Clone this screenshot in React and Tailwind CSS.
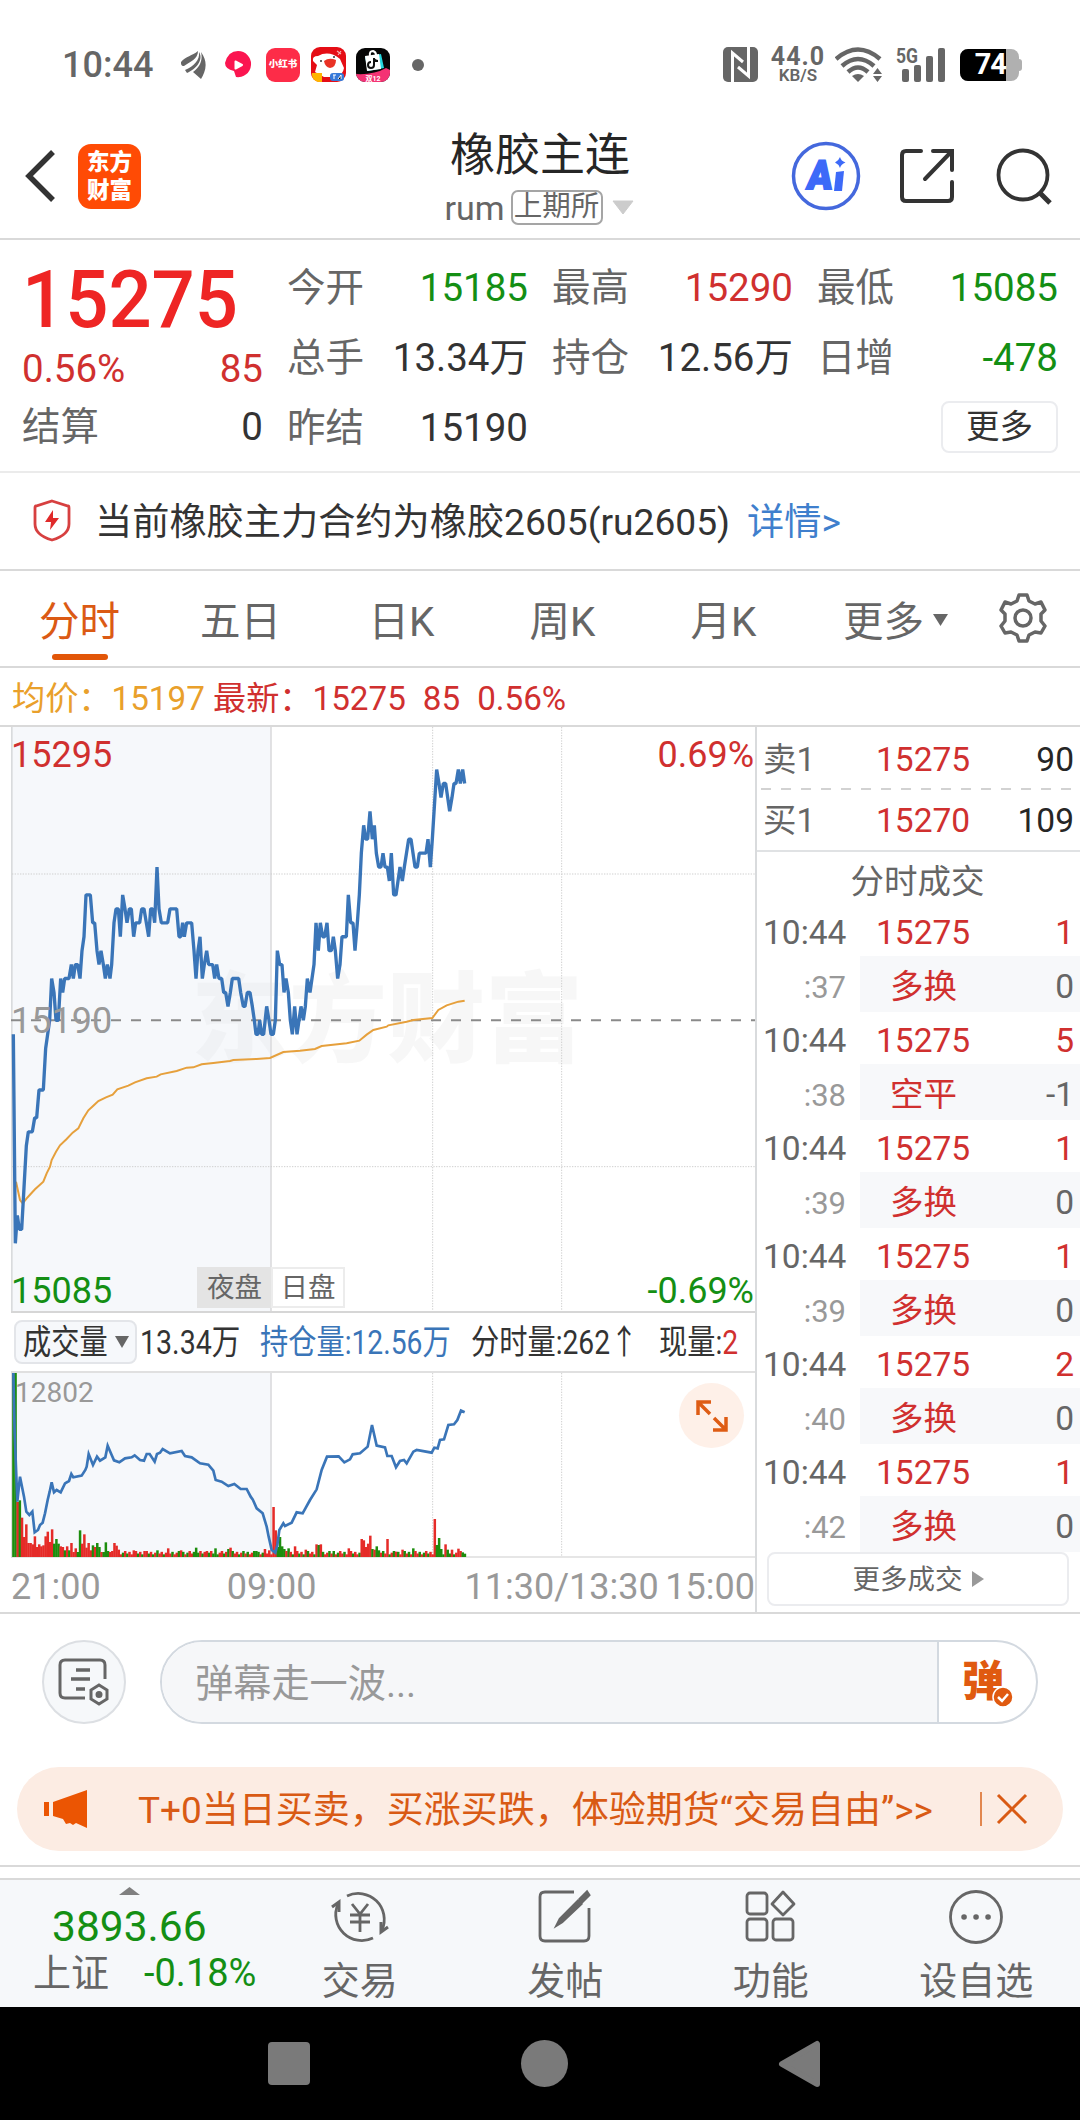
import { clsx } from 'clsx';

const RED = 'text-[#d0302f]';
const GREEN = 'text-[#148f14]';

const QUOTE_COLUMNS = [
  [
    { label: '今开', value: '15185', color: GREEN },
    { label: '总手', value: '13.34万' },
    { label: '昨结', value: '15190' },
  ],
  [
    { label: '最高', value: '15290', color: RED },
    { label: '持仓', value: '12.56万' },
  ],
  [
    { label: '最低', value: '15085', color: GREEN },
    { label: '日增', value: '-478', color: GREEN },
  ],
];

const TABS = ['分时', '五日', '日K', '周K', '月K'];

const TRADES = [
  { sec: ':37', price: '15275', qty: '1', kind: '多换', diff: '0' },
  { sec: ':38', price: '15275', qty: '5', kind: '空平', diff: '-1' },
  { sec: ':39', price: '15275', qty: '1', kind: '多换', diff: '0' },
  { sec: ':39', price: '15275', qty: '1', kind: '多换', diff: '0' },
  { sec: ':40', price: '15275', qty: '2', kind: '多换', diff: '0' },
  { sec: ':42', price: '15275', qty: '1', kind: '多换', diff: '0' },
];

// [x, ticks from settlement price], 3 units per pixel, 1 tick = 5
const PRICE = [
  [40, -1], [46, -16], [52, -14], [58, -15], [65, -15], [72, -12], [79, -9], [85, -8], [97, -8],
  [104, -7], [110, -7], [117, -5], [130, -5], [137, -2], [143, -1], [149, 0], [155, 3], [162, 2],
  [168, 0], [175, 0], [182, 3], [188, 2], [194, 3], [207, 3], [214, 4], [220, 3], [226, 4],
  [233, 4], [240, 3], [246, 5], [252, 6], [258, 9], [271, 9], [278, 7], [284, 7], [291, 5],
  [297, 4], [303, 5], [310, 4], [316, 3], [322, 4], [330, 3], [335, 4], [342, 7], [348, 8],
  [355, 8], [361, 6], [368, 9], [375, 8], [381, 7], [388, 8], [394, 8], [401, 6], [407, 7],
  [419, 7], [425, 8], [432, 8], [439, 7], [446, 6], [452, 8], [458, 8], [464, 7], [471, 11],
  [477, 8], [484, 7], [503, 7], [510, 8], [530, 8], [537, 6], [542, 6], [548, 7], [553, 6],
  [560, 7], [575, 7], [582, 5], [588, 3], [594, 5], [600, 6], [607, 3], [613, 4], [620, 5],
  [626, 4], [638, 4], [644, 3], [650, 4], [657, 3], [665, 3], [671, 2], [677, 2], [684, 1],
  [691, 2], [697, 3], [716, 3], [722, 2], [730, 1], [735, 1], [742, 2], [750, 2], [757, 1],
  [763, 0], [768, -1], [774, -1], [779, 0], [785, -1], [791, -1], [800, 1], [807, 0], [813, -1],
  [820, -1], [826, 0], [832, 5], [839, 4], [846, 4], [852, 2], [858, 3], [865, 2], [871, 0],
  [877, -1], [884, 1], [891, -1], [897, 0], [903, 1], [910, 0], [916, 1], [922, 3], [930, 2],
  [936, 3], [942, 4], [948, 7], [955, 5], [961, 7], [968, 6], [974, 6], [981, 7], [987, 5],
  [994, 5], [1000, 6], [1006, 5], [1013, 3], [1020, 4], [1026, 6], [1039, 6], [1045, 9],
  [1052, 7], [1059, 7], [1065, 5], [1072, 7], [1078, 9], [1084, 12], [1091, 14], [1097, 13],
  [1103, 13], [1110, 15], [1117, 13], [1123, 14], [1129, 12], [1136, 11], [1143, 11], [1149, 12],
  [1155, 11], [1162, 11], [1168, 10], [1174, 12], [1181, 9], [1188, 9], [1194, 10], [1200, 11],
  [1207, 10], [1213, 11], [1226, 13], [1233, 13], [1245, 11], [1252, 11], [1258, 12], [1278, 12],
  [1284, 13], [1291, 11], [1297, 13], [1310, 18], [1317, 17], [1323, 16], [1330, 17], [1337, 17],
  [1349, 15], [1356, 16], [1362, 17], [1368, 17], [1375, 18], [1381, 17], [1388, 18], [1394, 17],
];
const pricePoints = PRICE.map(([x, t]) => `${x},${880 - t * 41.8}`).join(' ');

const AVG_POINTS =
  '48,1364 60,1419 68,1429 80,1414 92,1401 105,1387 130,1364 140,1339 150,1319 155,1299 168,1274 180,1255 200,1236 218,1217 235,1204 250,1174 265,1150 280,1136 295,1122 318,1111 338,1103 352,1087 385,1076 405,1066 440,1054 470,1049 482,1042 530,1032 560,1022 580,1021 605,1012 640,1008 690,1002 700,999 770,996 810,993 850,975 900,971 945,966 965,957 1040,949 1078,941 1100,923 1120,909 1160,899 1165,895 1220,884 1240,879 1297,873 1315,849 1340,835 1375,824 1394,821';

const HOLD_POINTS =
  '40,219 44,400 52,605 60,530 72,590 79,635 88,645 97,635 104,697 114,690 120,675 128,668 135,640 143,600 149,575 155,547 162,577 170,570 182,577 195,550 207,543 214,522 220,532 245,527 256,510 260,500 266,462 279,495 291,470 300,482 316,472 323,437 335,465 342,481 358,487 375,475 395,472 404,466 420,480 432,482 440,462 449,462 464,485 471,462 480,458 488,447 510,460 545,453 555,468 575,472 600,490 625,494 640,512 647,540 665,545 685,558 703,552 722,567 740,567 752,590 758,598 770,625 788,640 800,680 806,710 815,750 826,758 832,735 838,690 850,670 855,678 875,668 890,637 908,640 930,600 950,568 965,510 981,470 1016,469 1033,487 1050,478 1058,463 1080,460 1103,440 1116,375 1130,437 1155,442 1162,468 1175,468 1188,502 1200,483 1212,480 1220,490 1240,455 1250,450 1295,458 1303,443 1313,445 1320,420 1332,418 1345,375 1362,373 1372,360 1383,332 1394,337';

// opening minutes, then the peaks of the rest of the session
const OPENING = [
  -552, -552, 165, -170, 118, 60, 98, 42, 42, 38, 62, 30, 38, 32, 35, 62, 76, 45, 83, -40, -54, -40,
  32, 30, -20, 32, -20, 42, 15, 26, -15, -80, 40, 68, 28, 42, 20, -35, 30, -42, -30, 15, -15, -44,
  -18, 15, 18, 42, 34, 22,
];
const PEAKS = {
  56: 20, 61: 18, 67: -20, 72: 26, 78: 20, 85: -28, 90: 18, 94: -26, 100: -24, 101: 28, 113: -18,
  117: 24, 119: 20, 121: 150, 122: 80, 123: -30, 124: -60, 125: -32, 126: -24, 128: -26, 131: 32,
  136: 22, 141: 38, 142: -36, 143: 38, 149: -18, 156: 26, 162: 54, 163: 50, 164: 30, 165: 40,
  166: 64, 167: -24, 168: 22, 169: -32, 170: -20, 174: 54, 178: 16, 181: 22, 186: -26, 196: 114,
  197: -36, 198: -57, 199: -24, 201: 38, 202: -22, 204: 22, 207: 25, 208: 18, 209: -14, 210: -10,
};
const VOLUME = Array.from({ length: 211 }, (_, i) => {
  if (i < OPENING.length) return OPENING[i];
  const base = 8 + ((i * 7) % 5) * 2.5;
  return PEAKS[i] ?? ((i * 11) % 7 < 3 ? -base : base);
});

const StatusBar = () => (
  <div className="flex h-[96px] items-center pt-[33px] text-[#666]">
    <span className="ml-[62px] w-[93px] text-[36px] font-medium leading-none">10:44</span>
    <svg className="ml-[26px]" width="25" height="28" viewBox="0 0 25 28" fill="#666">
      <path d="M0 11C5 5 11 5 17 0C17 8 9 11 3 15C0 15 0 13 0 11Z" />
      <path d="M18 1C23 9 15 18 6 22L4 19C13 15 19 9 18 1Z" />
      <path d="M20 1C28 12 24 21 20 28L12 21C19 16 22 9 20 1Z" />
    </svg>
    <svg className="ml-[18px]" width="28" height="28" viewBox="0 0 28 28">
      <path d="M14 0A13 13 0 0 1 27 14A13 13 0 0 1 12 26L10 20Q1 18 1 12Q4 0 14 0Z" fill="#fb1550" />
      <path d="M11.500 10.500L18 14L11.500 17.500Z" fill="#fff" stroke="#fff" strokeWidth="2" strokeLinejoin="round" />
    </svg>
    <div className="ml-[14px] flex h-[34px] w-[34px] items-center justify-center rounded-[9px] bg-[#fd2c48] text-[9.5px] font-black text-white">
      小红书
    </div>
    <svg className="ml-[11px]" width="35" height="35" viewBox="0 0 35 35">
      <rect width="35" height="35" rx="9" fill="#e50d15" />
      <path d="M4 25L6 18L2 14Q1 9 7 9Q18 3 29 12L33 21Q32 27 26 30H13Z" fill="#fff" />
      <path d="M13 14Q18 10 25 13Q25 20 19 21Q14 20 13 14Z" fill="#e93225" />
      <circle cx="10" cy="14" r="1" fill="#333" />
      <circle cx="23" cy="10" r="1" fill="#333" />
      <path d="M26 4L30 7M30 4L27 8" stroke="#f7b0b0" strokeWidth="1.200" />
      <path d="M1 26H11V35H7Q1 33 1 28Z" fill="#ffb400" />
      <rect x="19" y="26" width="14" height="8" rx="3" fill="#3679d8" />
      <path d="M22 28H25M23 28V32M27 32L30 28V32" stroke="#fff" strokeWidth="1" />
    </svg>
    <svg className="ml-[10px]" width="34" height="34" viewBox="0 0 34 34">
      <defs>
        <clipPath id="shop"><rect width="34" height="34" rx="9" /></clipPath>
      </defs>
      <g clipPath="url(#shop)">
        <rect width="34" height="34" fill="#060606" />
        <path d="M0 26Q18 27 30 20L34 22V34H0Z" fill="#f43374" />
        <path d="M9 9L25 6L28 20L12 23Z" fill="#25d9e0" />
        <path d="M9 8L23 6L25 21L11 23Z" fill="#fff" />
        <path d="M14 8Q13 3 17 3Q20 4 20 7" stroke="#fff" strokeWidth="2" fill="none" />
        <path d="M18 10V17A3 3 0 1 1 15 14M18 11Q19 13 22 13" stroke="#111" strokeWidth="2" fill="none" />
        <text x="17" y="32.500" textAnchor="middle" fontSize="7" fontWeight="700" fill="#fff">双12</text>
      </g>
    </svg>
    <span className="ml-[22px] h-[12px] w-[12px] rounded-full bg-[#666]" />

    <svg className="ml-[299px]" width="35" height="35" viewBox="0 0 35 35">
      <rect width="35" height="35" rx="5" fill="#666" />
      <path d="M9.500 35V6L20 15M25.500 0V29L15 20" fill="none" stroke="#fff" strokeWidth="3" />
    </svg>
    <div className="ml-[11px] flex w-[58px] flex-col items-center font-bold leading-none">
      <span className="text-[25px] leading-[20px] tracking-[1px]">44.0</span>
      <span className="text-[17px] font-semibold leading-[16px]">KB/S</span>
    </div>
    <svg className="ml-[8px]" width="48" height="36" viewBox="0 0 48 36">
      <g fill="none" stroke="#666" strokeWidth="4.500">
        <path d="M1 12Q23 -7 45 12" />
        <path d="M7 19Q23 5 39 19" />
        <path d="M13 25Q23 16 33 25" />
      </g>
      <path d="M17 29Q23 25 29 29L23 35Z" fill="#666" />
      <path d="M38 27L42.500 21L47 27ZM38 29L42.500 35L47 29Z" fill="#666" />
    </svg>
    <svg className="ml-[13px] overflow-visible" width="50" height="36" viewBox="0 0 50 36">
      <g fill="#666">
        <text x="0" y="15.500" fontSize="20" fontWeight="700" textLength="22" lengthAdjust="spacingAndGlyphs">5G</text>
        <rect x="6" y="22" width="7" height="13" rx="2" />
        <rect x="18" y="18" width="7" height="17" rx="2" />
        <rect x="30" y="9" width="7" height="26" rx="2" />
        <rect x="42" y="1" width="7" height="34" rx="2" />
      </g>
    </svg>
    <div className="ml-[14px] flex items-center">
      <div className="flex h-[32px] w-[59px] items-center overflow-hidden rounded-[8px] bg-[#b0b0b0]">
        <div className="flex h-full w-[46px] items-center justify-end bg-black text-[29px] font-bold leading-none tracking-[-1px] text-white">
          74
        </div>
      </div>
      <span className="h-[12px] w-[3px] rounded-r-[3px] bg-[#b0b0b0]" />
    </div>
  </div>
);

const Header = () => (
  <header className="flex h-[144px] items-center border-b-2 border-[#d9d9d9] pt-[18px]">
    <div className="flex w-[340px] items-center">
      <svg className="ml-[24px]" width="34" height="54" viewBox="0 0 34 54">
        <path d="M29 3L5 27L29 51" fill="none" stroke="#333" strokeWidth="5.500" />
      </svg>
      <div className="ml-[20px] flex h-[65px] w-[63px] flex-col items-center justify-center rounded-[13px] bg-[#ff4b05] text-[22.5px] font-black leading-[28px] text-white">
        <span>东方</span>
        <span>财富</span>
      </div>
    </div>
    <div className="flex w-[400px] flex-col items-center pt-[4px]">
      <h1 className="text-[45px] font-normal leading-[50px] text-[#262626]">橡胶主连</h1>
      <div className="mt-[9px] flex items-center pr-[2px] text-[#666]">
        <span className="text-[34px] leading-none">rum</span>
        <span className="ml-[6px] flex h-[35px] w-[92px] items-center justify-center rounded-[7px] border-2 border-[#a5a5a5] text-[28.5px] leading-none">
          上期所
        </span>
        <svg className="ml-[9px]" width="22" height="15" viewBox="0 0 22 15">
          <path d="M1 1H21L11 14Z" fill="#ccc" stroke="#ccc" strokeLinejoin="round" />
        </svg>
      </div>
    </div>
    <div className="flex items-center pl-[51px]">
      <svg width="70" height="70" viewBox="0 0 70 70">
        <circle cx="35" cy="35" r="32.500" fill="none" stroke="#4468dd" strokeWidth="3.500" />
        <text x="14" y="48" fontSize="40" fontWeight="900" textLength="25" lengthAdjust="spacingAndGlyphs" transform="translate(7 0) skewX(-7)" fill="#3d6af8" stroke="#3d6af8" strokeWidth="2">A</text>
        <path d="M45 31L53 30L51 50H43Z" fill="#3d6af8" />
        <path d="M49 16Q50 20 54.500 21.500Q50 23 49 27Q47.500 23 44 21.500Q47.500 20 49 16Z" fill="#3d6af8" />
      </svg>
      <svg className="ml-[38px]" width="56" height="56" viewBox="0 0 56 56" fill="none" stroke="#333" strokeWidth="4">
        <path d="M22 3H7Q3 3 3 7V49Q3 53 7 53H49Q53 53 53 49V34" strokeLinecap="round" />
        <path d="M34 3H53V22M52 4L26 31" strokeLinecap="round" />
      </svg>
      <svg className="ml-[41px]" width="58" height="58" viewBox="0 0 58 58" fill="none" stroke="#333" strokeWidth="3.800">
        <circle cx="27" cy="28" r="24.500" />
        <path d="M43 45L54 56" strokeWidth="5" />
      </svg>
    </div>
  </header>
);

const Quote = () => (
  <section className="flex h-[233px] gap-[24px] border-b-2 border-[#ebebeb] pt-[13px] pl-[22px] text-[38.5px] leading-none text-[#333]">
    <div className="w-[241px]">
      <div className="flex h-[93px] items-center">
        <span className="inline-block origin-left scale-x-[0.95] text-[80px] font-medium text-[#ee2524]">15275</span>
      </div>
      <div className={clsx('flex h-[46px] items-center justify-between', RED)}>
        <span>0.56%</span>
        <span>85</span>
      </div>
      <div className="flex h-[70px] items-center justify-between">
        <span className="text-[#666]">结算</span>
        <span>0</span>
      </div>
    </div>
    {QUOTE_COLUMNS.map((rows, i) => (
      <div key={i} className="w-[241px]">
        {rows.map(({ label, value, color }) => (
          <div key={label} className="flex h-[70px] items-center justify-between">
            <span className="text-[#666]">{label}</span>
            <span className={color}>{value}</span>
          </div>
        ))}
        {i === 2 && (
          <div className="flex h-[68px] items-center justify-end">
            <button className="h-[52px] w-[117px] rounded-[8px] border-2 border-[#ebecef] text-[33.500px]">更多</button>
          </div>
        )}
      </div>
    ))}
  </section>
);

const Notice = () => (
  <div className="flex h-[98px] items-center border-b-2 border-[#d9d9d9] pl-[33px] text-[37.2px] leading-none text-[#333]">
    <svg className="mb-[2px]" width="38" height="43" viewBox="0 0 38 43">
      <path d="M19 2L35 7Q36 7 36 9V25Q36 36 19 41Q2 36 2 25V9Q2 7 3 7Z" fill="none" stroke="#d74040" strokeWidth="2.800" />
      <path d="M20 11L12 23H18L17 31L26 19H20Z" fill="#e02a2a" />
    </svg>
    <span className="ml-[24px] pt-[3px]">当前橡胶主力合约为橡胶2605(ru2605)</span>
    <a className="ml-[17px] pt-[3px] text-[#3f7fcd]">详情&gt;</a>
  </div>
);

const Tabs = () => (
  <nav className="flex h-[97px] items-center border-b-2 border-[#d9d9d9] text-[40.5px] leading-none text-[#666]">
    {TABS.map((tab, i) => (
      <div
        key={tab}
        className={clsx('relative flex h-full w-[161px] items-center justify-center pt-[7px] pr-[2px]', i === 0 && 'text-[#db5a14]')}
      >
        {tab}
        {i === 0 && <span className="absolute bottom-[6px] left-[52px] h-[6px] w-[56px] rounded-full bg-[#e25608]" />}
      </div>
    ))}
    <div className="ml-[38px] flex items-center pt-[7px]">
      更多
      <svg className="mb-[5px] ml-[9px]" width="15" height="12" viewBox="0 0 15 12">
        <path d="M0 0H15L7.500 12Z" fill="#666" />
      </svg>
    </div>
    <svg className="ml-[51px] mb-[1px]" width="48" height="50" viewBox="0 0 48 50" fill="none" stroke="#666" strokeWidth="3.500" strokeLinejoin="round">
      <path d="M18 8L20 2H28L30 8L36 11L42 9L46 17L42 21V28L46 33L42 40L36 39L30 42L28 48H20L18 42L12 39L6 40L2 33L6 28V21L2 17L6 9L12 11Z" />
      <circle cx="24" cy="25" r="8" />
    </svg>
  </nav>
);

const PriceChart = () => (
  <div className="relative h-[586px]">
    <span className="absolute left-[180px] top-[244px] text-[98px] font-black leading-[100px] text-black/[0.03]">东方财富</span>
    <svg className="absolute inset-0" width="745" height="586" viewBox="33 0 2235 1758">
      <rect x="36" y="0" width="777" height="1755" fill="#e0e6f0" fillOpacity="0.28" />
      <path d="M35 0V1756" stroke="#d9dbdd" strokeWidth="6" />
      <path d="M813 0V1756" stroke="#dcdcde" strokeWidth="5" />
      <path d="M1298 0V1756M1685 0V1756M36 441H2265M36 1319H2265" stroke="#cfcfcf" strokeWidth="3" strokeDasharray="4 4" />
      <path d="M33 1755H2265" stroke="#d6d6d6" strokeWidth="6" />
      <path d="M33 880H2265" stroke="#8a8a8a" strokeWidth="6" strokeDasharray="30 30" />
      <polyline points={AVG_POINTS} fill="none" stroke="#e6a03c" strokeWidth="6" />
      <polyline points={pricePoints} fill="none" stroke="#3a75b8" strokeWidth="10" strokeLinejoin="bevel" />
    </svg>
    <div className="absolute inset-0 flex flex-col justify-between pt-[10px] pb-[4px] text-[36px] leading-[36px]">
      <div className="flex justify-between pr-px">
        <span className={RED}>15295</span>
        <span className={RED}>0.69%</span>
      </div>
      <span className="pb-[5px] text-[#999]">15190</span>
      <div className="flex justify-between pr-px">
        <span className={GREEN}>15085</span>
        <span className={GREEN}>-0.69%</span>
      </div>
    </div>
    <div className="absolute bottom-[5px] left-[186px] flex h-[41px] text-[27.5px] leading-none text-[#666]">
      <span className="flex w-[74px] items-center justify-center bg-[#e4e4e4] pt-px pl-px">夜盘</span>
      <span className="flex w-[74px] items-center justify-center border-2 border-[#ececec] bg-white">日盘</span>
    </div>
  </div>
);

const VolumeInfo = () => (
  <div className="flex h-[60px] items-center border-b-2 border-[#e0e0e0] text-[34px] leading-none whitespace-nowrap text-[#333]">
    <div className="ml-[3px] flex h-[44px] w-[123px] items-center rounded-[8px] border-2 border-[#e3e5e9] bg-[#f6f8fb] pl-[7px]">
      <span className="w-[90px] origin-left scale-x-[0.83]">成交量</span>
      <svg className="ml-[2px]" width="14" height="12" viewBox="0 0 14 12">
        <path d="M0 0H14L7 12Z" fill="#666" />
      </svg>
    </div>
    <span className="ml-[3px] w-[120px] origin-left scale-x-[0.84]">13.34万</span>
    <span className="w-[211px] origin-left scale-x-[0.83] text-[#3a75b8]">持仓量:12.56万</span>
    <span className="w-[188px] origin-left scale-x-[0.83]">分时量:262↑</span>
    <span className="w-[90px] origin-left scale-x-[0.83]">
      现量:<span className={RED}>2</span>
    </span>
  </div>
);

const VolumeChart = () => (
  <div className="relative h-[185px]">
    <svg width="745" height="185" viewBox="33 219 2235 555">
      <rect x="36" y="219" width="777" height="552" fill="#f6f8fb" />
      <path d="M35 219V774M813 219V774" stroke="#dcdcde" strokeWidth="5" />
      <path d="M1298 219V771M1685 219V771" stroke="#cfcfcf" strokeWidth="3" strokeDasharray="4 4" />
      <path d="M33 771H2265" stroke="#dedede" strokeWidth="5" />
      {VOLUME.map((v, i) => (
        <rect
          key={i}
          x={36.5 + i * 6.45}
          y={771 - Math.abs(v)}
          width="7.500"
          height={Math.abs(v)}
          fill={v < 0 ? '#1c8d0d' : '#e52b28'}
        />
      ))}
      <polyline points={HOLD_POINTS} fill="none" stroke="#3a75b8" strokeWidth="8" />
    </svg>
    <span className="absolute left-[4px] top-[6px] text-[28px] leading-[28px] text-[#999]">12802</span>
    <span className="absolute left-[668px] top-[10px] flex h-[65px] w-[65px] items-center justify-center rounded-full bg-[#fef0e8]">
      <svg width="32" height="32" viewBox="0 0 32 32" fill="none" stroke="#de5c14" strokeWidth="3.500">
        <path d="M15 2H2V15M2 2L14 14M17 30H30V17M30 30L18 18" />
      </svg>
    </span>
  </div>
);

const OrderPanel = () => (
  <aside className="w-[325px] border-l-2 border-[#d9dbdd] text-[33.5px] leading-none">
    <div className="flex h-[61px] items-center pt-[4px] pr-[6px] pl-[6px]">
      <span className="w-[113px] text-[#666]">卖1</span>
      <span className={RED}>15275</span>
      <span className="flex-1 text-right text-[#262626]">90</span>
    </div>
    <svg className="ml-[4px] block" width="312" height="2">
      <path d="M0 1H312" stroke="#d2d2d2" strokeWidth="2" strokeDasharray="10 10" />
    </svg>
    <div className="flex h-[60px] items-center pt-[2px] pr-[6px] pl-[6px]">
      <span className="w-[113px] text-[#666]">买1</span>
      <span className={RED}>15270</span>
      <span className="flex-1 text-right text-[#262626]">109</span>
    </div>
    <div className="flex h-[54px] items-center justify-center border-t-2 border-[#e0e2e4] pt-[8px] pr-[2px] text-[#666]">分时成交</div>
    {TRADES.map(({ sec, price, qty, kind, diff }, i) => (
      <div key={i} className="h-[108px] text-[#666]">
        <div className="flex h-[52px] items-center pt-[5px] pr-[6px] pl-[6px]">
          <span className="w-[113px]">10:44</span>
          <span className={RED}>{price}</span>
          <span className={clsx('flex-1 text-right', RED)}>{qty}</span>
        </div>
        <div className="flex h-[56px] items-center">
          <span className="w-[103px] pt-[6px] pr-[14px] text-right text-[31px] text-[#999]">{sec}</span>
          <div className="flex h-full flex-1 items-center bg-[#f7f8fa] pt-[6px] pr-[6px] pl-[30px]">
            <span className={RED}>{kind}</span>
            <span className="flex-1 text-right">{diff}</span>
          </div>
        </div>
      </div>
    ))}
    <button className="ml-[10px] flex h-[54px] w-[302px] items-center justify-center rounded-[8px] border-2 border-[#ebecef] pt-[2px] text-[27.5px] text-[#666]">
      更多成交
      <svg className="mb-[2px] ml-[9px]" width="12" height="16" viewBox="0 0 12 16">
        <path d="M0 0L12 8L0 16Z" fill="#999" />
      </svg>
    </button>
  </aside>
);

const Comment = () => (
  <div className="flex h-[138px] items-center pl-[42px]">
    <span className="mt-[-2px] flex h-[84px] w-[84px] items-center justify-center rounded-full border-2 border-[#dcdfe3] bg-[#f6f8fa]">
      <svg width="54" height="50" viewBox="0 0 54 50" fill="none" stroke="#666" strokeWidth="3">
        <path d="M48 22V8Q48 3 43 3H8Q3 3 3 8V36Q3 41 8 41H28" />
        <path d="M19 13H33M14 22H33M19 32H28" strokeWidth="3.500" />
        <path d="M42 28L50 33V42L42 47L34 42V33Z" />
        <circle cx="42" cy="37.500" r="2" fill="#666" />
      </svg>
    </span>
    <div className="mt-[-2px] ml-[34px] flex h-[84px] w-[878px] overflow-hidden rounded-full border-2 border-[#d3d9e0] bg-white">
      <div className="flex w-[777px] items-center border-r-2 border-[#d3d9e0] bg-[#f6f7f9] pt-[5px] pl-[33px] text-[38.2px] leading-none text-[#999]">
        弹幕走一波...
      </div>
      <div className="relative flex flex-1 items-center pl-[23px] text-[42px] font-black leading-none text-[#e05a10]">
        弹
        <svg className="absolute top-[44px] left-[53px]" width="22" height="22" viewBox="0 0 22 22">
          <circle cx="11" cy="11" r="10" fill="#e05a10" stroke="#fff" strokeWidth="1.500" />
          <path d="M6 11L10 15L16 8" fill="none" stroke="#fff" strokeWidth="2.500" />
        </svg>
      </div>
    </div>
  </div>
);

const Banner = () => (
  <div className="mx-[17px] mt-[15px] flex h-[84px] items-center rounded-full bg-[#fcece3] pl-[27px] text-[37px] leading-none text-[#d95a14]">
    <svg width="44" height="38" viewBox="0 0 44 38" fill="#eb5503">
      <path d="M0 12H5V26H0ZM9 12L43 0V38L32 33L29 35L26 33L22 34L19 29L9 26Z" />
    </svg>
    <span className="ml-[50px] w-[842px] pt-[2px] whitespace-nowrap">T+0当日买卖，买涨买跌，体验期货“交易自由”&gt;&gt;</span>
    <span className="h-[34px] w-[2px] bg-[#e2874f]" />
    <svg className="ml-[14px]" width="32" height="32" viewBox="0 0 32 32">
      <path d="M2 2L30 30M30 2L2 30" stroke="#d95a14" strokeWidth="3" />
    </svg>
  </div>
);

const ACTIONS = [
  {
    label: '交易',
    icon: (
      <>
        <path d="M17 9A26 26 0 0 1 52 43M43 51A26 26 0 0 1 8 17" />
        <path d="M2 20L9 15V25M58 40L51 45V35" strokeWidth="3" />
        <path d="M22 17L30 27L38 17M20 28H40M20 35H40M30 27V45" />
      </>
    ),
  },
  {
    label: '发帖',
    icon: (
      <>
        <path d="M39 5H10Q5 5 5 10V49Q5 54 10 54H49Q54 54 54 49V21" />
        <path d="M52 5L54 8L47 15L45 12ZM43 14L46 17L27 35L22 38L25 32Z" fill="#666" />
      </>
    ),
  },
  {
    label: '功能',
    icon: (
      <>
        <rect x="6" y="6" width="20" height="21" rx="3" />
        <rect x="6" y="32" width="20" height="21" rx="3" />
        <rect x="32" y="32" width="20" height="21" rx="3" />
        <path d="M42 5L53 17L42 28L31 17Z" strokeLinejoin="round" />
      </>
    ),
  },
  {
    label: '设自选',
    icon: (
      <>
        <circle cx="30" cy="30" r="25.500" />
        <path d="M18 30H18.100M30 30H30.100M42 30H42.100" strokeWidth="5.500" strokeLinecap="round" />
      </>
    ),
  },
];

const BottomBar = () => (
  <footer className="flex h-[129px] border-t-2 border-[#d9d9d9] bg-[#f6f8fa] text-[38px] leading-none text-[#666]">
    <div className="flex w-[257px] flex-col pt-[7px]">
      <svg className="ml-[119px]" width="21" height="8" viewBox="0 0 21 8">
        <path d="M0 8L10.500 0L21 8Z" fill="#808080" />
      </svg>
      <span className={clsx('mt-[11px] ml-[52px] text-[42.5px]', GREEN)}>3893.66</span>
      <div className="mt-[5px] flex items-center">
        <span className="ml-[33px] w-[111px]">上证</span>
        <span className={GREEN}>-0.18%</span>
      </div>
    </div>
    {ACTIONS.map(({ label, icon }) => (
      <div key={label} className="flex w-[205.5px] flex-col items-center pt-[7px]">
        <svg width="60" height="60" viewBox="0 0 60 60" fill="none" stroke="#666" strokeWidth="2.800">
          {icon}
        </svg>
        <span className="mt-[15px]">{label}</span>
      </div>
    ))}
  </footer>
);

const NavBar = () => (
  <div className="flex h-[113px] items-center bg-black">
    <span className="ml-[268px] h-[43px] w-[42px] rounded-[4px] bg-[#7a7a7a]" />
    <span className="ml-[211px] h-[47px] w-[47px] rounded-full bg-[#7a7a7a]" />
    <svg className="ml-[210px]" width="44" height="48" viewBox="0 0 44 48">
      <path d="M4 24L39 4V44Z" fill="#7a7a7a" stroke="#7a7a7a" strokeWidth="6" strokeLinejoin="round" />
    </svg>
  </div>
);

const App = () => (
  <div className="h-[2120px] w-[1080px] overflow-hidden bg-white font-[Roboto,'Noto_Sans_CJK_SC',sans-serif]">
    <StatusBar />
    <Header />
    <Quote />
    <Notice />
    <Tabs />
    <div className="flex h-[57px] items-center pt-[4px] pl-[12px] text-[33.2px] leading-none whitespace-nowrap">
      <span className="w-[201px] text-[#e9a02b]">均价：15197</span>
      <span className={RED}>最新：15275</span>
      <span className={clsx('ml-[17px]', RED)}>85</span>
      <span className={clsx('ml-[17px]', RED)}>0.56%</span>
    </div>
    <main className="flex h-[889px] border-y-2 border-[#d9d9d9]">
      <div className="w-[755px] pl-[11px]">
        <PriceChart />
        <VolumeInfo />
        <VolumeChart />
        <div className="flex h-[54px] items-center pt-[3px] text-[36px] leading-none text-[#999]">
          <span className="w-[216px]">21:00</span>
          <span className="w-[238px]">09:00</span>
          <span className="w-[201px]">11:30/13:30</span>
          <span>15:00</span>
        </div>
      </div>
      <OrderPanel />
    </main>
    <Comment />
    <Banner />
    <div className="mt-[14px] h-[13px] border-t-2 border-[#d9d9d9]" />
    <BottomBar />
    <NavBar />
  </div>
);

export default App;
